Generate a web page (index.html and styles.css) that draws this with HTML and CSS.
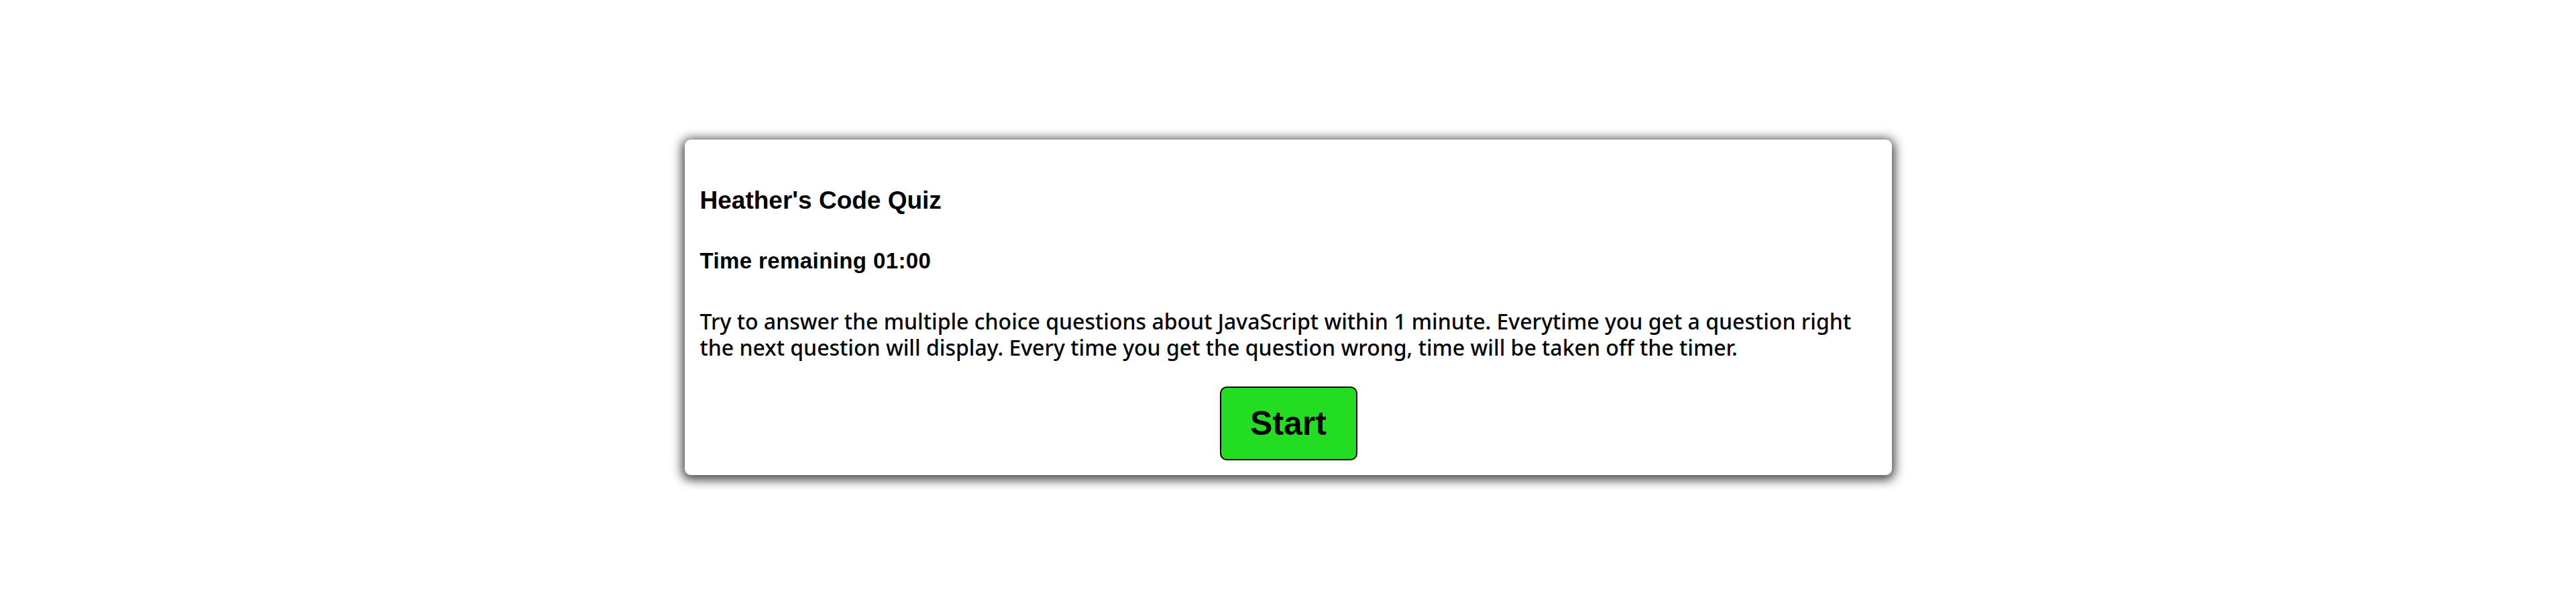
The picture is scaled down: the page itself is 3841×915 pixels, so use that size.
FILE: index.html
```html
<!DOCTYPE html>
<html lang="en">
<head>
<meta charset="utf-8">
<title>Heather's Code Quiz</title>
<link rel="stylesheet" href="styles.css">
</head>
<body>
<main class="page">
  <section class="card">
    <h1 class="title">Heather's Code Quiz</h1>
    <h2 class="timer">Time remaining 01:00</h2>
    <p class="intro">Try to answer the multiple choice questions about JavaScript within 1 minute. Everytime you get a question right the next question will display. Every time you get the question wrong, time will be taken off the timer.</p>
    <div class="actions">
      <button class="start" type="button">Start</button>
    </div>
  </section>
</main>
</body>
</html>
```
FILE: styles.css
```css
html, body {
  margin: 0;
  padding: 0;
  background: #ffffff;
}

body {
  font-family: "Liberation Sans", Arial, sans-serif;
  color: #000000;
}

.page {
  box-sizing: border-box;
  min-height: 915px;
  display: flex;
  justify-content: center;
  align-items: flex-start;
  padding-top: 208px;
}

.card {
  box-sizing: border-box;
  width: 1800px;
  height: 500px;
  background: #ffffff;
  border-radius: 9px;
  box-shadow: 0 3px 16px 4px rgba(0, 0, 0, 0.75);
  padding: 69px 22px 23px 23px;
  display: flex;
  flex-direction: column;
}

.title {
  margin: 0;
  font-size: 37px;
  line-height: 44px;
  font-weight: 700;
}

.timer {
  margin: 48px 0 0;
  font-size: 33px;
  line-height: 40px;
  font-weight: 700;
  letter-spacing: 0.4px;
}

.intro {
  margin: 50px 0 0;
  font-family: "Noto Sans", "Liberation Sans", Arial, sans-serif;
  font-size: 32px;
  line-height: 39px;
  font-weight: 500;
}

.actions {
  display: flex;
  justify-content: center;
  margin-top: 39px;
}

.start {
  box-sizing: border-box;
  width: 205px;
  height: 110px;
  background: #22dd22;
  border: 2px solid #000000;
  border-radius: 10px;
  font-family: "Liberation Sans", Arial, sans-serif;
  font-size: 50px;
  font-weight: 700;
  color: #000000;
  padding: 0;
  cursor: pointer;
}
```
